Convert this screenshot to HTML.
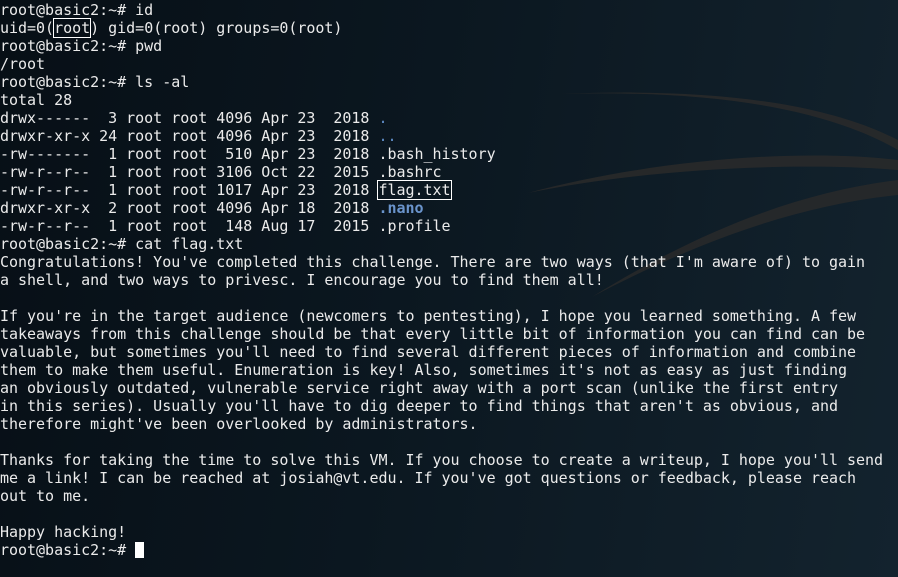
<!DOCTYPE html>
<html><head><meta charset="utf-8"><style>
html,body{margin:0;padding:0;width:898px;height:577px;overflow:hidden;background:#0a141c;}
.bg{position:absolute;left:0;top:0;width:898px;height:577px;background:linear-gradient(100deg,#070f16 0%,#0b1720 45%,#13232e 100%);}
svg{position:absolute;left:0;top:0}
pre{position:absolute;left:0;top:1px;margin:0;font-family:"DejaVu Sans Mono","Liberation Mono",monospace;font-size:15px;line-height:18px;letter-spacing:-0.02px;color:#ebebeb;}
.b{color:#5f8cc6}.bb{color:#6a94cc;font-weight:bold}
.box{outline:1.5px solid #fff;outline-offset:0px}
.cur{display:inline-block;width:9px;height:16px;background:#fff;vertical-align:-3px}
</style></head><body>
<div class="bg"></div>
<svg width="898" height="577">
<path d="M560 94 C700 90 820 105 898 150 L898 140 C820 100 700 88 560 94Z" fill="#2a2a2a" opacity="0.85"/>
<path d="M528 193 C650 160 800 148 898 160 L898 170 C800 162 650 168 528 193Z" fill="#2a2a2a" opacity="0.85"/>
<path d="M592 297 C700 230 800 192 898 180 L898 195 C800 205 700 240 592 297Z" fill="#2a2a2a" opacity="0.8"/>
</svg>
<pre>root@basic2:~# id
uid=0(<span class="box">root</span>) gid=0(root) groups=0(root)
root@basic2:~# pwd
/root
root@basic2:~# ls -al
total 28
drwx------  3 root root 4096 Apr 23  2018 <span class="b">.</span>
drwxr-xr-x 24 root root 4096 Apr 23  2018 <span class="b">..</span>
-rw-------  1 root root  510 Apr 23  2018 .bash_history
-rw-r--r--  1 root root 3106 Oct 22  2015 .bashrc
-rw-r--r--  1 root root 1017 Apr 23  2018 <span class="box">flag.txt</span>
drwxr-xr-x  2 root root 4096 Apr 18  2018 <span class="bb">.nano</span>
-rw-r--r--  1 root root  148 Aug 17  2015 .profile
root@basic2:~# cat flag.txt
Congratulations! You've completed this challenge. There are two ways (that I'm aware of) to gain
a shell, and two ways to privesc. I encourage you to find them all!

If you're in the target audience (newcomers to pentesting), I hope you learned something. A few
takeaways from this challenge should be that every little bit of information you can find can be
valuable, but sometimes you'll need to find several different pieces of information and combine
them to make them useful. Enumeration is key! Also, sometimes it's not as easy as just finding
an obviously outdated, vulnerable service right away with a port scan (unlike the first entry
in this series). Usually you'll have to dig deeper to find things that aren't as obvious, and
therefore might've been overlooked by administrators.

Thanks for taking the time to solve this VM. If you choose to create a writeup, I hope you'll send
me a link! I can be reached at josiah@vt.edu. If you've got questions or feedback, please reach
out to me.

Happy hacking!
root@basic2:~# <span class="cur"></span></pre>
</body></html>
